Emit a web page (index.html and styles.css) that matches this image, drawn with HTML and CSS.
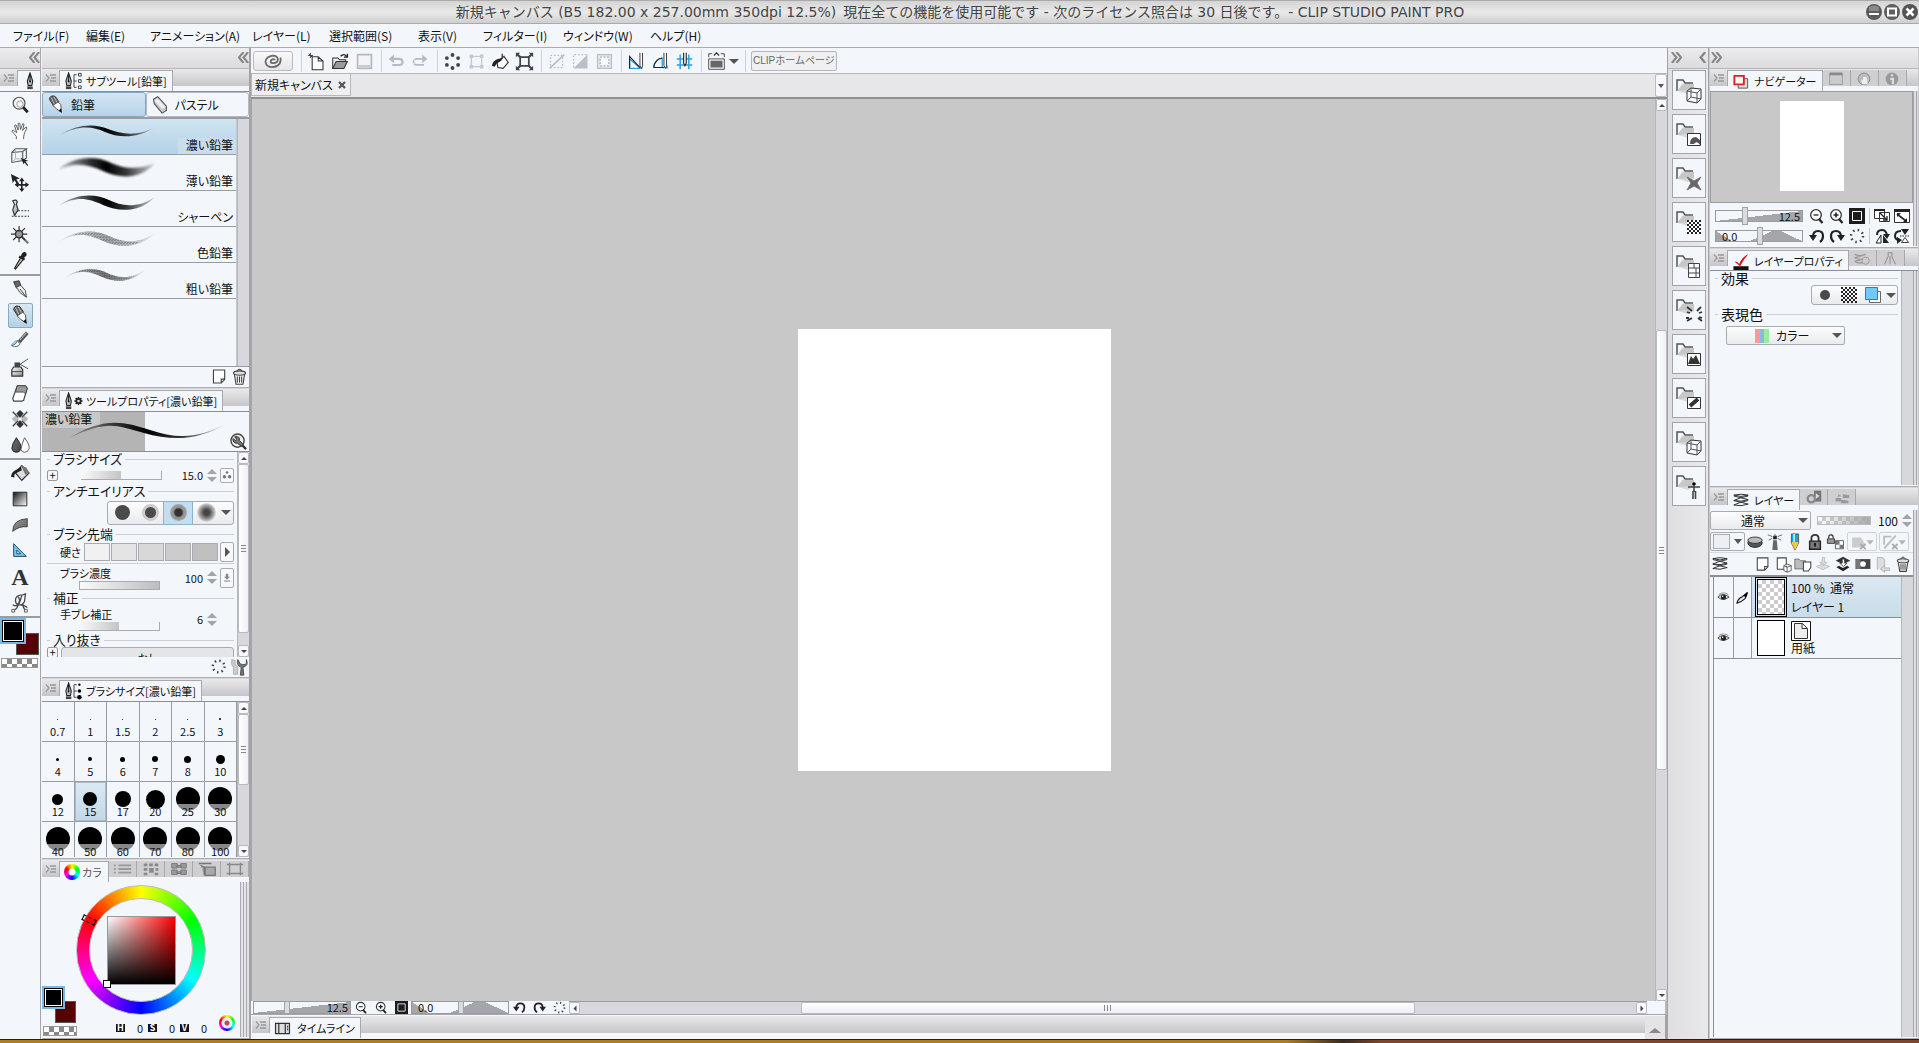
FILE: index.html
```html
<!DOCTYPE html>
<html lang="ja">
<head>
<meta charset="utf-8">
<title>CLIP STUDIO PAINT PRO</title>
<link rel="stylesheet" href="styles.css">
</head>
<body>
<svg class="defs" width="0" height="0" aria-hidden="true">
<defs>
<linearGradient id="gm" x1="0" y1="0" x2="1" y2="1"><stop offset="0" stop-color="#fff"/><stop offset="1" stop-color="#888"/></linearGradient>
<linearGradient id="gd" x1="0" y1="0" x2="1" y2="1"><stop offset="0" stop-color="#111"/><stop offset="1" stop-color="#fff"/></linearGradient>
<linearGradient id="gs" x1="0" x2="1"><stop offset="0" stop-color="#111" stop-opacity=".2"/><stop offset=".35" stop-color="#111" stop-opacity=".9"/><stop offset=".5" stop-color="#000"/><stop offset=".7" stop-color="#111" stop-opacity=".85"/><stop offset="1" stop-color="#111" stop-opacity=".15"/></linearGradient>
<pattern id="pc" width="4" height="4" patternUnits="userSpaceOnUse"><path d="M0 0h2v2h-2zM2 2h2v2h-2z" fill="#222"/></pattern>
<pattern id="pn" width="3" height="3" patternUnits="userSpaceOnUse"><path d="M0 0h2v1h-2zM1 2h2v1h-2z" fill="#444"/></pattern>
</defs>
<symbol id="i-menu" viewBox="0 0 12 10"><path d="M1 1.500l3 3.500-3 3.500M5 2h6M6 5h5M5 8h6" fill="none" stroke="#999" stroke-width="1.300"/></symbol>
<symbol id="i-chl" viewBox="0 0 12 12"><path d="M6 0L1 6l5 6M11 0L6 6l5 6" fill="none" stroke="#858585" stroke-width="2.200"/></symbol>
<symbol id="i-chr" viewBox="0 0 12 12"><path d="M1 0l5 6-5 6M6 0l5 6-5 6" fill="none" stroke="#858585" stroke-width="2.200"/></symbol>
<symbol id="i-ch1" viewBox="0 0 12 12"><path d="M9 0L4 6l5 6" fill="none" stroke="#858585" stroke-width="2.500"/></symbol>
<symbol id="i-nib" viewBox="0 0 10 20"><path d="M5 1v9M5 1L2 10l1 5h4l1-5z" fill="#bbb" stroke="#222" stroke-width="1.200"/><circle cx="5" cy="10.500" r="1"/><path d="M2 16h6v3H2z" fill="#444"/></symbol>
<symbol id="i-nibs" viewBox="0 0 22 20"><use href="#i-nib" x="0" y="0" width="10" height="20"/><path d="M14 3h-3v14h3M11 10h3" fill="none" stroke="#333"/><path d="M16 1.500h3v3h-3zM16 8.500h3v3h-3zM16 15.500h3v3h-3z" fill="none" stroke="#333"/></symbol>
<symbol id="i-nibd" viewBox="0 0 22 20"><use href="#i-nib" x="0" y="0" width="10" height="20"/><path d="M14 3h-3v14h3M11 10h3" fill="none" stroke="#333"/><circle cx="17" cy="3" r="1.300"/><circle cx="17" cy="10" r="2"/><circle cx="17" cy="17" r="2.500"/></symbol>
<symbol id="i-nibg" viewBox="0 0 22 20"><use href="#i-nib" x="0" y="0" width="10" height="20"/><path d="M16 5.500v9M11.500 10h9M12.800 6.800l6.400 6.400M19.200 6.800l-6.400 6.400" stroke="#222" stroke-width="1.600"/><circle cx="16" cy="10" r="2.400" fill="#ddd" stroke="#222" stroke-width="1.800"/></symbol>
<symbol id="t-zoom" viewBox="0 0 22 22"><circle cx="10" cy="9" r="6.500" fill="#f4f4f4" stroke="#555" stroke-width="1.300"/><circle cx="11" cy="10" r="3.500" fill="none" stroke="#999"/><path d="M14.500 13.500l5 5.500" stroke="#222" stroke-width="3"/></symbol>
<symbol id="t-hand" viewBox="0 0 22 22"><path d="M7 20v-3l-5-6 1.500-1 4 3L5 5l1.500-.7L9 10V2.500h1.700L11.500 9.500 14 3l1.500.5-1.700 7L17.500 6.500l1.200 1L16 13l-1 4v3" fill="#fff" stroke="#555"/></symbol>
<symbol id="t-cube" viewBox="0 0 22 22"><path d="M2 6l12-1v10l-12 2zM2 6l4-4h12l-4 3M18 2v10l-4 3" fill="none" stroke="#555" stroke-width="1.200"/><path d="M6 2v11l-4 4M6 13h9" fill="none" stroke="#aaa"/><path d="M12 12l8 3-3 1 3 4-1 1-3-4-1 2z" fill="#222"/></symbol>
<symbol id="t-move" viewBox="0 0 22 22"><path d="M1 1l10 5-4 1 3 5-2 1-3-5-2 3z" fill="#222"/><path d="M13 7v12M7 13h12" stroke="#222" stroke-width="1.800"/><path d="M13 5l3 4h-6zM13 21l3-4h-6zM5 13l4-3v6zM21 13l-4-3v6z" fill="#222"/></symbol>
<symbol id="t-sel" viewBox="0 0 22 22"><path d="M3 2q4-2 5 1l-1 3 2 6-4 6-2-6 2-6z" fill="url(#gm)" stroke="#333" stroke-width="1.300"/><path d="M9 13h12M2 19h19" stroke="#333" stroke-width="1.200" stroke-dasharray="2 1.500"/></symbol>
<symbol id="t-wand" viewBox="0 0 22 22"><path d="M12 12l8 8" stroke="#777" stroke-width="2.500"/><path d="M10 1v18M1 10h18M3.500 3.500l13 13M16.500 3.500l-13 13" stroke="#333" stroke-width="1.300"/><circle cx="10" cy="10" r="4" fill="#999" stroke="#333" stroke-width="1.500"/></symbol>
<symbol id="t-drop" viewBox="0 0 22 22"><path d="M6 20l-1-1 7-12 3 2z" fill="url(#gm)" stroke="#222" stroke-width="1.200"/><path d="M10 6l6 3.500" stroke="#222" stroke-width="2.500"/><path d="M12 6q1-5 4-5t2 4l-4 4z" fill="#222"/></symbol>
<symbol id="t-pen" viewBox="0 0 22 22"><path d="M4 3l6-1 2 5-5 3z" fill="#666" stroke="#333"/><path d="M7 9l5-2 5 6 1 7-7-5z" fill="#eee" stroke="#444"/><path d="M11 11l7 9" stroke="#333"/></symbol>
<symbol id="t-pencil" viewBox="0 0 22 22"><path d="M4 5q0-3 3-4 3 0 4 1l4 6-6 5z" fill="#666" stroke="#333"/><path d="M6 3l4 8M9 2l4 7" stroke="#ccc"/><path d="M8 12l6-4 3 3 1 9-6-4z" fill="#fff" stroke="#444"/><path d="M14.500 18l3.500 2.500-.5-5z" fill="#111"/></symbol>
<symbol id="t-brush" viewBox="0 0 22 22"><path d="M1 16q6-9 10-4 0 8-10 4z" fill="#9fd0ee" stroke="#8bc"/><path d="M2 16q5-1 6-5l3 3q-3 5-9 2z" fill="#fff" stroke="#567"/><path d="M10 12l9-10" stroke="#555" stroke-width="4"/><path d="M11 10l7-8" stroke="#ddd"/></symbol>
<symbol id="t-air" viewBox="0 0 22 22"><path d="M2 14l2-3h8l2 3v7H2z" fill="url(#gm)" stroke="#333" stroke-width="1.300"/><path d="M5 6h6v5H5z" fill="#444"/><path d="M11 8l9-6M11 8l9 5M2 16h12" fill="none" stroke="#444"/></symbol>
<symbol id="t-eraser" viewBox="0 0 22 22"><path d="M8 3h9l2 3-4 13-2 1H4l-1-3z" fill="#fff" stroke="#444" stroke-width="1.300"/><path d="M8 3h9l2 3-2 6-2-2H6z" fill="#999" stroke="#444"/></symbol>
<symbol id="t-deco" viewBox="0 0 22 22"><path d="M2 11l4-4 4 4-4 4zM12 11l4-4 4 4-4 4z" fill="#bbb"/><path d="M11 1l4 4-4 5-4-5zM11 12l4 5-4 4-4-4z" fill="#333"/><path d="M3 3l6 6M19 3l-6 6M3 19l6-6M19 19l-6-6" stroke="#444" stroke-width="1.500"/></symbol>
<symbol id="t-blur" viewBox="0 0 22 22"><path d="M7 3q6 8 5 12-1 4-5 4t-5-4q0-5 5-12z" fill="url(#gm)" stroke="#222"/><path d="M7 3q6 8 5 12-1 4-5 4t-5-4q0-5 5-12z" fill="#222" opacity=".65"/><path d="M16 3q6 8 5 12-1 4-5 4-3 0-4-3 1-6 4-13z" fill="#fff" stroke="#555"/></symbol>
<symbol id="t-fill" viewBox="0 0 22 22"><path d="M6 11l7-8 8 8-8 8z" fill="#ddd" stroke="#333" stroke-width="1.300"/><path d="M12 3l6 2 3 6-4 2z" fill="#777"/><path d="M1 15q1-6 7-8l4-3 1 4-6 3q-3 1-2 5z" fill="#222"/></symbol>
<symbol id="b-fill" viewBox="0 0 22 22"><path d="M7 12l8-7 5 7-6 7-6-1z" fill="#fff" stroke="#333" stroke-width="1.300"/><path d="M13 2v6" stroke="#333" stroke-width="1.500"/><path d="M1 16q1-6 7-8l5-1-1 3-5 3-3 4z" fill="#222"/></symbol>
<symbol id="t-grad" viewBox="0 0 22 22"><path d="M3.500 3.500h15v15h-15z" fill="url(#gd)" stroke="#222"/></symbol>
<symbol id="t-fig" viewBox="0 0 22 22"><path d="M3 18Q3 5 19 4v9q-9-1-16 5z" fill="url(#gm)" stroke="#444" /><path d="M3 18Q3 5 19 4v9q-9-1-16 5z" fill="#333" opacity=".5"/></symbol>
<symbol id="t-ruler" viewBox="0 0 22 22"><path d="M4 3v14h14zM7.500 10v4h4z" fill="#6ec5ef" fill-rule="evenodd" stroke="#246" /></symbol>
<symbol id="t-corr" viewBox="0 0 22 22"><path d="M4 19q5-2 5-8M18 20q-4-3-4-9M6 8q0-6 8-6l3-1-1 8q-2 5-7 4-3-1-3-5zM9 4q3 4 0 8M13 3l-3 9M3 13q4 2 7 0 6 0 9 3" fill="none" stroke="#444" stroke-width="1.400"/><path d="M2 18h3v3H2zM16 18h3v3h-3z" fill="#fff" stroke="#555"/></symbol>
<symbol id="i-page" viewBox="0 0 22 22"><path d="M4 3.500h13v11l-4 4H4zM17 14h-4v4" fill="#fff" stroke="#444" stroke-width="1.300"/></symbol>
<symbol id="i-trash" viewBox="0 0 22 22"><path d="M5 8h12l-2 12H7z" fill="#eee" stroke="#444" stroke-width="1.300"/><ellipse cx="11" cy="7" rx="7" ry="2.500" fill="#ddd" stroke="#444" stroke-width="1.300"/><path d="M8 5q3-5 6 0M8.500 11v7M13.500 11v7M11 11v7" fill="none" stroke="#444" stroke-width="1.200"/></symbol>
<symbol id="i-swirl" viewBox="0 0 22 18"><path d="M13 8q-1-2-4 0-2 3 2 3.500 5 0 5.500-4Q16 3 11 3 3 4 2.500 10q1 6 8 6 8-1 9-7V5" fill="none" stroke="#6a6a6a" stroke-width="2"/></symbol>
<symbol id="b-new" viewBox="0 0 22 22"><path d="M6 5.500h7l5.500 5v10H6zM13 5.500v5h5" fill="#fff" stroke="#333" stroke-width="1.200"/><path d="M1 4h6M4 1v6M2 2l4 4" stroke="#333"/></symbol>
<symbol id="b-open" viewBox="0 0 22 22"><path d="M2 19V7h6l2 2h7v3" fill="#eee" stroke="#333" stroke-width="1.200"/><path d="M2 19l4-8h13l-4 8z" fill="#999" stroke="#333" stroke-width="1.200"/><path d="M11 5q4-4 7 0M19 2v4h-4" fill="none" stroke="#222" stroke-width="1.500"/></symbol>
<symbol id="b-save" viewBox="0 0 22 22"><path d="M3 3h16v16H3z" fill="#f4f4f6" stroke="#b7b9bc" stroke-width="2"/><path d="M4 15h14v3H4z" fill="#c8cacc"/></symbol>
<symbol id="b-undo" viewBox="0 0 22 22"><path d="M5 8h9q4 0 4 3.500T14 15H6" fill="none" stroke="#b7bac0" stroke-width="2.500"/><path d="M8 3v10L2 8z" fill="#b7bac0"/></symbol>
<symbol id="b-redo" viewBox="0 0 22 22"><path d="M16 8H7q-4 0-4 3.500T7 15h9" fill="none" stroke="#b7bac0" stroke-width="2" stroke-dasharray="12 1 3 1"/><path d="M13 3v10l6-5z" fill="#b7bac0"/></symbol>
<symbol id="b-spin" viewBox="0 0 22 22"><g fill="#444"><circle cx="11" cy="3.500" r="2.200"/><circle cx="11" cy="18.500" r="2.200"/><circle cx="4.500" cy="7" r="2.200"/><circle cx="17.500" cy="7" r="2.200"/><circle cx="4.500" cy="15" r="2.200"/><circle cx="17.500" cy="15" r="2.200"/></g></symbol>
<symbol id="b-tf" viewBox="0 0 22 22"><path d="M5 5h12v12H5z" fill="none" stroke="#c5c8cc" stroke-width="1.500"/><path d="M3 3h4v4H3zM15 3h4v4h-4zM3 15h4v4H3zM15 15h4v4h-4z" fill="#c5c8cc"/></symbol>
<symbol id="b-x" viewBox="0 0 22 22"><path d="M6 6h10v10H6z" fill="none" stroke="#444" stroke-width="2"/><path d="M2 2l5 5M20 2l-5 5M2 20l5-5M20 20l-5-5" stroke="#444" stroke-width="2.500"/><path d="M1 1h5l-5 5zM21 1h-5l5 5zM1 21h5l-5-5zM21 21h-5l5-5z" fill="#444"/></symbol>
<symbol id="b-des" viewBox="0 0 22 22"><path d="M4 4h14v14H4z" fill="none" stroke="#bcbfc4" stroke-width="1.500" stroke-dasharray="2 2"/><path d="M3 19L20 3" stroke="#bcbfc4" stroke-width="2"/></symbol>
<symbol id="b-inv" viewBox="0 0 22 22"><path d="M3 19L19 3v16z" fill="#bcbfc4"/><path d="M18 3H3v15" fill="none" stroke="#bcbfc4" stroke-width="1.500" stroke-dasharray="2 2"/></symbol>
<symbol id="b-sel" viewBox="0 0 22 22"><path d="M3 3h16v16H3z" fill="#e6e8ea" stroke="#bcbfc4" stroke-width="1.500"/><path d="M6 6h10v10H6z" fill="#f8f9fb" stroke="#aaadb2" stroke-width="1.500" stroke-dasharray="2 2"/></symbol>
<symbol id="b-sn1" viewBox="0 0 22 22"><path d="M3 8v11h13z" fill="none" stroke="#2d9fe0" stroke-width="1.500"/><path d="M3 19V5l12 13" fill="none" stroke="#222" stroke-width="1.300"/><path d="M15 1v15l2 3 1-3V1" fill="#fff" stroke="#222"/></symbol>
<symbol id="b-sn2" viewBox="0 0 22 22"><path d="M3 18Q4 8 13 7v11M16 10l3 8h-6" fill="none" stroke="#2d9fe0" stroke-width="1.500"/><path d="M3 18Q5 8 13 7M3 18h12" fill="none" stroke="#222" stroke-width="1.300"/><path d="M15 1v15l2 3 1-3V1" fill="#fff" stroke="#222"/></symbol>
<symbol id="b-sn3" viewBox="0 0 22 22"><path d="M2 8h18M2 15h18M6 3v17M16 3v17" fill="none" stroke="#2d9fe0" stroke-width="1.700"/><path d="M10 1v12l1.500 3 1.500-3V1" fill="#fff" stroke="#222" stroke-width="1.300"/></symbol>
<symbol id="b-obj" viewBox="0 0 22 22"><path d="M2 6V2h4M16 2h4v4" fill="none" stroke="#333"/><path d="M8 4l3-3 3 3" fill="none" stroke="#333" stroke-width="1.500"/><path d="M2 8h18v12H2z" fill="#fff" stroke="#333"/><path d="M4 10h14v8H4z" fill="#666"/></symbol>
<symbol id="n-out" viewBox="0 0 16 16"><circle cx="7" cy="7" r="5.300" fill="#fff" stroke="#333" stroke-width="1.300"/><path d="M4.500 7h5" stroke="#222" stroke-width="1.300"/><path d="M10 11l3.500 4" stroke="#222" stroke-width="2.200"/></symbol>
<symbol id="n-in" viewBox="0 0 16 16"><circle cx="7" cy="7" r="5.300" fill="#fff" stroke="#333" stroke-width="1.300"/><path d="M4.500 7h5M7 4.500v5" stroke="#222" stroke-width="1.600"/><path d="M10 11l3.500 4" stroke="#222" stroke-width="2.200"/></symbol>
<symbol id="n-fit" viewBox="0 0 16 16"><path d="M0 0h16v16H0z" fill="#1c1c1c"/><path d="M3.500 3.500h9v9h-9z" fill="none" stroke="#fff" stroke-width="1"/></symbol>
<symbol id="n-ccw" viewBox="0 0 16 16"><path d="M4 9Q4 3 9 3q5 0 5 5 0 4-3 6" fill="none" stroke="#222" stroke-width="2.200"/><path d="M0 7h8l-4 6z" fill="#222"/></symbol>
<symbol id="n-cw" viewBox="0 0 16 16"><path d="M12 9q0-6-5-6-5 0-5 5 0 4 3 6" fill="none" stroke="#222" stroke-width="2.200"/><path d="M16 7H8l4 6z" fill="#222"/></symbol>
<symbol id="n-rst" viewBox="0 0 16 16"><circle cx="8" cy="8" r="6" fill="none" stroke="#444" stroke-width="2.500" stroke-dasharray="1.500 3.200"/></symbol>
<symbol id="n-w1" viewBox="0 0 16 16"><path d="M.5 1.500h10v9H.5zM5.500 4.500h10v9h-10z" fill="#fff" stroke="#333"/><path d="M0 1h11v2H0z" fill="#222"/><path d="M6 5l7 7M13 8v4H9" stroke="#222" stroke-width="1.300" fill="none"/></symbol>
<symbol id="n-w2" viewBox="0 0 16 16"><path d="M.5 1.500h15v13H.5z" fill="#fff" stroke="#333"/><path d="M0 1h16v3H0z" fill="#222"/><path d="M3 6l9 7" stroke="#222" stroke-width="1.600" fill="none"/><path d="M13 10v4H9zM3 9V5h4z" fill="#222"/></symbol>
<symbol id="n-fh" viewBox="0 0 16 16"><path d="M7 7v8H2z" fill="#fff" stroke="#222"/><path d="M3 7q0-5 5-5 4 0 5 5" fill="none" stroke="#222" stroke-width="2"/><path d="M9 6h7l-3 5zM9 7v8h6z" fill="#222"/></symbol>
<symbol id="n-fv" viewBox="0 0 16 16"><path d="M7 1h8l-4 6z" fill="#222"/><path d="M6 8h10" stroke="#222" stroke-dasharray="1.500 1"/><path d="M7.500 14.500h7l-3.500-5z" fill="#fff" stroke="#444"/><path d="M7 3Q1 3 1 8q0 3 3 4" fill="none" stroke="#222" stroke-width="2"/><path d="M3 9l5 3-5 4z" fill="#222"/></symbol>
<symbol id="d-fold" viewBox="0 0 28 28"><path d="M2 15V4h6l2 3h8" fill="none" stroke="#555" stroke-width="1.500"/><path d="M2 15l6-7h11v6z" fill="#bbb"/><path d="M7 8h12v7l-6 3-10-3z" fill="#ccc" opacity=".7"/></symbol>
<symbol id="d-cube" viewBox="0 0 28 28"><path d="M12 15l4-3 10 1v10l-4 4-10-2z" fill="#f6f8fb" stroke="#333"/><path d="M12 15l10 2 4-4M22 17v10M16 12v9l-4 4M16 21l10 2" fill="none" stroke="#555"/></symbol>
<symbol id="i-eye" viewBox="0 0 16 12"><path d="M1 6q6-6 14 0-8 6-14 0z" fill="#ddd" stroke="#333"/><circle cx="8" cy="6" r="3.200" fill="#222"/><circle cx="7" cy="5" r="1" fill="#fff"/><path d="M2 3q6-4 12 0" fill="none" stroke="#777"/></symbol>
<symbol id="l-stack" viewBox="0 0 20 16"><path d="M2 2q8 3 16 0-8-2-16 0zM18 3Q8 5 2 8q8 2 16-1M18 8Q8 10 2 13q8 2 16-1M2 3q8 2 16 4M2 8q8 2 16 4" fill="none" stroke="#333" stroke-width="1.100"/></symbol>
<symbol id="s-thin" viewBox="0 0 100 24"><path d="M1 16C22 3 38 4 51 9S80 17 98 7C80 19 62 18 48 12S22 5 1 16z" fill="url(#gs)"/></symbol>
<symbol id="s-thick" viewBox="0 0 100 24"><path d="M1 14C16-1 40 0 52 6S80 15 98 7C82 25 62 22 46 15S18 6 1 14z" fill="url(#gs)"/></symbol>
<symbol id="s-mid" viewBox="0 0 100 24"><path d="M1 14C20 0 40 2 52 8S80 17 98 5C82 21 62 20 46 13S20 4 1 14z" fill="url(#gs)"/></symbol>
<symbol id="s-noise" viewBox="0 0 100 24"><path d="M1 14C20 0 40 2 52 8S80 17 98 5C82 21 62 20 46 13S20 4 1 14z" fill="url(#gs)" opacity=".5"/><path d="M14 8C28 1 42 3 52 8S72 15 86 12C76 19 62 20 46 13S28 5 14 8z" fill="url(#pn)" opacity=".6"/></symbol>
</svg>

<div class="app">
<header class="titlebar">
  <h1>新規キャンバス (B5 182.00 x 257.00mm 350dpi 12.5%)&ensp;現在全ての機能を使用可能です - 次のライセンス照合は 30 日後です。- CLIP STUDIO PAINT PRO</h1>
  <div class="winbtns">
    <button aria-label="最小化"><svg viewBox="0 0 16 16"><circle cx="8" cy="8" r="8" fill="#5b5b5b"/><path d="M3 3q5-3 10 0v4H3z" fill="#8a8a8a"/><path d="M3 9h10v2H3z" fill="#fff"/></svg></button>
    <button aria-label="最大化"><svg viewBox="0 0 16 16"><circle cx="8" cy="8" r="8" fill="#5f5f5f"/><path d="M4 4.500h8v7H4z" fill="none" stroke="#fff" stroke-width="2"/></svg></button>
    <button aria-label="閉じる"><svg viewBox="0 0 16 16"><circle cx="8" cy="8" r="8" fill="#555"/><path d="M4.500 4.500l7 7M11.500 4.500l-7 7" stroke="#fff" stroke-width="2.500"/></svg></button>
  </div>
</header>
<nav class="menubar"><button>ファイル(F)</button><button>編集(E)</button><button>アニメーション(A)</button><button>レイヤー(L)</button><button>選択範囲(S)</button><button>表示(V)</button><button>フィルター(I)</button><button>ウィンドウ(W)</button><button>ヘルプ(H)</button></nav>

<div class="work">
<aside class="tools">
  <div class="collapse end"><svg class="chev"><use href="#i-chl"/></svg></div>
  <div class="tabs"><button class="tabmenu"><svg><use href="#i-menu"/></svg></button><div class="tab on nibtab"><svg class="nib"><use href="#i-nib"/></svg></div></div>
  <div class="toolset">
    <button><svg><use href="#t-zoom"/></svg></button><button><svg><use href="#t-hand"/></svg></button><button><svg><use href="#t-cube"/></svg></button><button><svg><use href="#t-move"/></svg></button><button><svg><use href="#t-sel"/></svg></button><button><svg><use href="#t-wand"/></svg></button><button><svg><use href="#t-drop"/></svg></button>
  </div>
  <div class="toolset">
    <button><svg><use href="#t-pen"/></svg></button><button class="sel"><svg><use href="#t-pencil"/></svg></button><button><svg><use href="#t-brush"/></svg></button><button><svg><use href="#t-air"/></svg></button><button><svg><use href="#t-eraser"/></svg></button><button><svg><use href="#t-deco"/></svg></button><button><svg><use href="#t-blur"/></svg></button>
  </div>
  <div class="toolset">
    <button><svg><use href="#t-fill"/></svg></button><button><svg><use href="#t-grad"/></svg></button><button><svg><use href="#t-fig"/></svg></button><button><svg><use href="#t-ruler"/></svg></button><button class="letter">A</button><button><svg><use href="#t-corr"/></svg></button>
  </div>
  <div class="swatches"><button class="sub" aria-label="サブカラー"></button><button class="main" aria-label="メインカラー"></button><button class="clear" aria-label="透明色"></button></div>
</aside>

<div class="left">
  <div class="collapse end"><svg class="chev"><use href="#i-chl"/></svg></div>
  <section class="panel">
    <div class="tabs"><button class="tabmenu"><svg><use href="#i-menu"/></svg></button><div class="tab on"><svg class="nibs"><use href="#i-nibs"/></svg><span>サブツール[鉛筆]</span></div></div>
    <div class="subgroups"><button class="on"><svg><use href="#t-pencil"/></svg>鉛筆</button><button><svg viewBox="0 0 22 22"><path d="M4 5l5-3 10 11v5l-5 3L5 10z" fill="#ccc" stroke="#555" stroke-width="1.300"/><path d="M5 6l4-2 9 10-4 2z" fill="#eee"/></svg>パステル</button></div>
    <div class="scroller subs">
      <ul class="brushes">
        <li class="on"><svg><use href="#s-thin"/></svg><span>濃い鉛筆</span></li>
        <li><svg class="soft"><use href="#s-thick"/></svg><span>薄い鉛筆</span></li>
        <li><svg><use href="#s-mid"/></svg><span>シャーペン</span></li>
        <li><svg class="pale"><use href="#s-noise"/></svg><span>色鉛筆</span></li>
        <li><svg class="small"><use href="#s-noise"/></svg><span>粗い鉛筆</span></li>
      </ul>
      <div class="vbar"></div>
    </div>
    <div class="foot"><button><svg><use href="#i-page"/></svg></button><button><svg><use href="#i-trash"/></svg></button></div>
  </section>

  <section class="panel">
    <div class="tabs"><button class="tabmenu"><svg><use href="#i-menu"/></svg></button><div class="tab on"><svg class="nibs"><use href="#i-nibg"/></svg><span>ツールプロパティ[濃い鉛筆]</span></div></div>
    <div class="preview"><span>濃い鉛筆</span><svg class="stroke" preserveAspectRatio="none" viewBox="0 0 160 24"><path d="M1 19C35-2 55 2 82 11S130 20 159 4C130 22 105 22 76 14S40 1 1 19z" fill="url(#gs)"/></svg><svg class="wrench" viewBox="0 0 18 18"><circle cx="8" cy="8" r="7" fill="#eee" stroke="#444" stroke-width="1.500"/><path d="M5 4l2 3-1 1-3-2q0 5 5 5l4 3 2-2-4-4q1-5-5-4z" fill="#777" stroke="#333"/><path d="M13 13l4 4" stroke="#333" stroke-width="2.500"/></svg></div>
    <div class="scroller">
      <div class="props">
        <h3>ブラシサイズ</h3>
        <div class="row r18"><button class="plus">+</button><input type="range" class="half" aria-label="ブラシサイズ"><input class="num" value="15.0" aria-label="サイズ値"><i class="spin"></i><button class="dyn"><svg viewBox="0 0 14 14"><circle cx="7" cy="4" r="1.500"/><circle cx="4" cy="9" r="2"/><circle cx="10" cy="9" r="2"/></svg></button></div>
        <h3>アンチエイリアス</h3>
        <div class="row r26"><div class="seg"><button><i class="dot"></i></button><button><i class="dot d2"></i></button><button class="on"><i class="dot d3"></i></button><button><i class="dot d4"></i></button><button class="dd"><i class="arr"></i></button></div></div>
        <h3>ブラシ先端</h3>
        <div class="row r22"><span class="sublabel">硬さ</span><div class="hard"><i></i><i></i><i></i><i></i><i></i></div><button class="dyn tall"><i class="arrr"></i></button></div>
        <div class="row r28 ruled"><div class="stack"><label for="dens">ブラシ濃度</label><input id="dens" type="range" class="full"></div><input class="num" value="100" aria-label="濃度値"><i class="spin"></i><button class="dyn tall"><svg viewBox="0 0 14 20"><path d="M5 3h4v5h3l-5 5-5-5h3zM2 14h10v2H2z" fill="#888"/></svg></button></div>
        <h3>補正</h3>
        <div class="row r28"><div class="stack"><label for="stab">手ブレ補正</label><input id="stab" type="range" class="half"></div><input class="num" value="6" aria-label="補正値"><i class="spin"></i><span class="dyn none"></span></div>
        <h3>入り抜き</h3>
        <div class="row r28 topal"><button class="plus">+</button><button class="wide">なし</button></div>
      </div>
      <div class="vbar"><button class="up"></button><div class="thumb t-prop"></div><button class="down"></button></div>
    </div>
    <div class="foot"><button><svg viewBox="0 0 22 22"><use href="#n-rst" x="1" y="2" width="18" height="18"/></svg></button><button><svg viewBox="0 0 22 22"><path d="M2 3l4 1v5l3 2v9H4v-8L2 9z" fill="#ccc" stroke="#aaa"/><path d="M9 3q-2 7 4 9l-1 9h4l-1-9q7-2 4-9v5l-4 1-3-1z" fill="#777" stroke="#444"/></svg></button></div>
  </section>

  <section class="panel">
    <div class="tabs"><button class="tabmenu"><svg><use href="#i-menu"/></svg></button><div class="tab on"><svg class="nibs"><use href="#i-nibd"/></svg><span>ブラシサイズ[濃い鉛筆]</span></div></div>
    <div class="scroller sizes">
      <div class="sizegrid">
        <button><i class="p1"></i>0.7</button><button><i class="p1"></i>1</button><button><i class="p1"></i>1.5</button><button><i class="p1"></i>2</button><button><i class="p1"></i>2.5</button><button><i class="p2"></i>3</button>
        <button><i class="p3"></i>4</button><button><i class="p4"></i>5</button><button><i class="p5"></i>6</button><button><i class="p6"></i>7</button><button><i class="p7"></i>8</button><button><i class="p9"></i>10</button>
        <button><i class="p11"></i>12</button><button class="on"><i class="p14"></i>15</button><button><i class="p16"></i>17</button><button><i class="p19"></i>20</button><button class="big"><i></i>25</button><button class="big"><i></i>30</button>
        <button class="big"><i></i>40</button><button class="big"><i></i>50</button><button class="big"><i></i>60</button><button class="big"><i></i>70</button><button class="big"><i></i>80</button><button class="big"><i></i>100</button>
      </div>
      <div class="vbar"><button class="up"></button><div class="thumb t-size"></div><button class="down"></button></div>
    </div>
  </section>

  <section class="panel grow">
    <div class="tabs"><button class="tabmenu"><svg><use href="#i-menu"/></svg></button><div class="tab on coltab"><i class="minwheel"></i><span>カラ</span></div>
      <button class="tab"><svg viewBox="0 0 22 14"><path d="M1 3h2M1 7h2M1 11h2M6 3h14M6 7h14M6 11h14" stroke="#999" stroke-width="2"/></svg></button>
      <button class="tab"><svg viewBox="0 0 22 14"><path d="M3 1h4v3H3zM9 1h4v3H9zM15 1h4v3h-4zM3 6h4v3H3zM9 6h5v5H9zM16 6h3v3h-3zM3 11h4v3H3zM15 11h4v3h-4z" fill="#888"/></svg></button>
      <button class="tab"><svg viewBox="0 0 22 14"><path d="M3 1h6v5H3zM13 1h6v5h-6zM3 8h6v5H3zM13 8h6v5h-6zM9 3h4v2H9zM9 10h4v2H9z" fill="#999" stroke="#777"/></svg></button>
      <button class="tab"><svg viewBox="0 0 22 14"><path d="M2 1h14M4 3l4 2v9M9 5h11v9H9z" fill="#aaa" stroke="#777" stroke-width="1.500"/></svg></button>
      <button class="tab"><svg viewBox="0 0 22 14"><path d="M2 2h18M2 12h18M5 0v14M17 0v14" stroke="#888" stroke-width="1.500"/></svg></button></div>
    <div class="color">
      <div class="wheelbox">
        <div class="wheel"><div class="hole"><div class="square"><i class="pick"></i></div></div><i class="huepick"></i></div>
        <div class="swatches"><button class="sub" aria-label="サブカラー"></button><button class="main" aria-label="メインカラー"></button><button class="clear" aria-label="透明色"></button></div>
        <div class="hsv"><b>H</b><span>0</span><b>S</b><span>0</span><b>V</b><span>0</span></div>
        <i class="miniplay"></i>
      </div>
      <div class="grip"></div>
    </div>
  </section>
</div>

<main class="main-col">
  <div class="toolbar">
    <button class="swirl"><svg><use href="#i-swirl"/></svg></button><i class="sep first"></i>
    <button><svg><use href="#b-new"/></svg></button><button><svg><use href="#b-open"/></svg></button><button><svg><use href="#b-save"/></svg></button><i class="sep"></i>
    <button><svg><use href="#b-undo"/></svg></button><button><svg><use href="#b-redo"/></svg></button><i class="sep"></i>
    <button><svg><use href="#b-spin"/></svg></button><button><svg><use href="#b-tf"/></svg></button><button><svg><use href="#b-fill"/></svg></button><button><svg><use href="#b-x"/></svg></button><i class="sep"></i>
    <button><svg><use href="#b-des"/></svg></button><button><svg><use href="#b-inv"/></svg></button><button><svg><use href="#b-sel"/></svg></button><i class="sep"></i>
    <button><svg><use href="#b-sn1"/></svg></button><button><svg><use href="#b-sn2"/></svg></button><button><svg><use href="#b-sn3"/></svg></button><i class="sep"></i>
    <button><svg><use href="#b-obj"/></svg></button><button class="ddn"><i class="arr"></i></button><i class="sep"></i>
    <a class="clip" href="#">CLIPホームページ</a>
  </div>
  <div class="doctabs"><div class="doctab">新規キャンバス<button aria-label="閉じる"><svg viewBox="0 0 8 8"><path d="M1 1l6 6M7 1L1 7" stroke="#555" stroke-width="2.200"/></svg></button></div><button class="doclist"><i class="arr"></i></button></div>
  <div class="canvasrow">
    <div class="canvas"><div class="paper"></div></div>
    <div class="vbar main-v"><button class="up"></button><div class="track"><div class="thumb"></div></div><button class="down"></button></div>
  </div>
  <div class="status">
    <div class="slidebox w98"><input type="range" class="wedge" aria-label="ズーム"><output>12.5</output></div>
    <button><svg><use href="#n-out"/></svg></button><button><svg><use href="#n-in"/></svg></button><button><svg><use href="#n-fit"/></svg></button>
    <div class="slidebox w98 rot"><input type="range" class="bulge" aria-label="回転"><output>0.0</output></div>
    <button><svg><use href="#n-ccw"/></svg></button><button><svg><use href="#n-cw"/></svg></button><button><svg><use href="#n-rst"/></svg></button>
    <div class="hbar"><button class="lt"></button><div class="track"><div class="thumb"><i></i></div></div><button class="rt"></button></div><i class="corner"></i>
  </div>
  <div class="timeline"><div class="tabs"><button class="tabmenu"><svg><use href="#i-menu"/></svg></button><div class="tab on"><svg class="tl" viewBox="0 0 18 14"><path d="M1.500 1.500h15v11h-15zM5 1v12M12 1v12" fill="#ddd" stroke="#333" stroke-width="1.300"/><path d="M14.500 4v6" stroke="#225" stroke-dasharray="2 1"/></svg><span>タイムライン</span></div></div><button class="rise" aria-label="開く"><svg viewBox="0 0 14 8"><path d="M1 7l6-5 6 5z" fill="#888"/></svg></button></div>
</main>

<aside class="dock">
  <div class="collapse between"><svg class="chev"><use href="#i-chr"/></svg><svg class="chev"><use href="#i-ch1"/></svg></div>
  <div class="dockbtns">
  <button><svg viewBox="0 0 28 28"><use href="#d-fold"/><use href="#d-cube"/></svg></button>
  <button><svg viewBox="0 0 28 28"><use href="#d-fold"/><path d="M12.500 13.500h13v12h-13z" fill="#fff" stroke="#333"/><path d="M15 24q0-7 6-7l4 3v5q-3-5-6-1z" fill="#555"/></svg></button>
  <button><svg viewBox="0 0 28 28"><use href="#d-fold"/><path d="M12 13l7 4 7-4-4 6 4 7-7-4-7 4 4-7z" fill="#666" stroke="#777"/></svg></button>
  <button><svg viewBox="0 0 28 28"><use href="#d-fold"/><path d="M12 12h14v14H12z" fill="#fff"/><path d="M12 12h14v14H12z" fill="url(#pc)"/></svg></button>
  <button><svg viewBox="0 0 28 28"><use href="#d-fold"/><path d="M13.500 11.500h11v14h-11zM13.500 16h11M19 11.500V16M13.500 21h11M21 16v9" fill="#fff" stroke="#444"/></svg></button>
  <button><svg viewBox="0 0 28 28"><use href="#d-fold"/><path d="M12 11l5 4M26 11l-4 4M12 25l5-3M27 25l-4-3M12 16l3 1M24 17l3-1M14 22l-3 0M24 21l3 1" stroke="#333" stroke-width="1.800"/></svg></button>
  <button><svg viewBox="0 0 28 28"><use href="#d-fold"/><path d="M12.500 13.500h13v12h-13z" fill="#fff" stroke="#333"/><path d="M13 24l3-8 2 3 3-4 4 9z" fill="#333"/></svg></button>
  <button><svg viewBox="0 0 28 28"><use href="#d-fold"/><path d="M12.500 13.500h13v11h-13z" fill="#fff" stroke="#333"/><path d="M15 22l8-7" stroke="#333" stroke-width="4"/></svg></button>
  <button><svg viewBox="0 0 28 28"><use href="#d-fold"/><use href="#d-cube"/></svg></button>
  <button><svg viewBox="0 0 28 28"><use href="#d-fold"/><circle cx="19" cy="12" r="1.800"/><path d="M13 15h12M19 14v6M18 19v8M20.500 19v8" stroke="#444" stroke-width="1.600"/></svg></button>
  </div>
</aside>

<div class="right">
  <div class="collapse"><svg class="chev"><use href="#i-chr"/></svg></div>
  <section class="panel nav">
    <div class="tabs"><button class="tabmenu"><svg><use href="#i-menu"/></svg></button><div class="tab on"><svg class="ic18" viewBox="0 0 18 18"><path d="M6 6h10v10H6z" fill="#ddd" stroke="#555"/><path d="M2 3h10v9H2z" fill="#fff" stroke="#d22" stroke-width="2"/></svg><span>ナビゲーター</span></div>
      <button class="tab"><svg viewBox="0 0 22 14"><path d="M4 2h14v12H4z" fill="#ccc" stroke="#999"/><path d="M4 1h14v3H4z" fill="#888"/></svg></button><button class="tab"><svg viewBox="0 0 22 14"><circle cx="11" cy="8" r="6.500" fill="#bbb" stroke="#888"/><path d="M8 9h2V6h4l1 8H9z" fill="#eee"/></svg></button><button class="tab"><svg viewBox="0 0 22 14"><circle cx="11" cy="8" r="7" fill="#999"/><path d="M9 8h3v6M11 3v2" stroke="#ddd" stroke-width="2.500" fill="none"/></svg></button></div>
    <div class="navwrap"><div class="navmain">
      <div class="navview"><div class="navpaper"></div></div>
      <div class="navctl"><div class="slidebox"><input type="range" class="wedge" aria-label="表示倍率"><output>12.5</output></div><button><svg><use href="#n-out"/></svg></button><button><svg><use href="#n-in"/></svg></button><button><svg><use href="#n-fit"/></svg></button><i class="vs"></i><button><svg><use href="#n-w1"/></svg></button><button><svg><use href="#n-w2"/></svg></button></div>
      <div class="navctl"><div class="slidebox rot"><input type="range" class="bulge" aria-label="角度"><output>0.0</output></div><button><svg><use href="#n-ccw"/></svg></button><button><svg><use href="#n-cw"/></svg></button><button><svg><use href="#n-rst"/></svg></button><i class="vs"></i><button><svg><use href="#n-fh"/></svg></button><button><svg><use href="#n-fv"/></svg></button></div>
    </div><div class="edge"></div></div>
  </section>

  <section class="panel lprop">
    <div class="tabs"><button class="tabmenu"><svg><use href="#i-menu"/></svg></button><div class="tab on"><svg class="ic18" viewBox="0 0 18 18"><path d="M1 14h16v4H1z" fill="#111"/><path d="M2 9q4 0 5 3Q10 4 17 1q-5 5-9 13z" fill="#d11"/></svg><span>レイヤープロパティ</span></div>
      <button class="tab"><svg viewBox="0 0 22 14"><path d="M3 3q6 3 12 0M3 7q6 3 12 0M3 11q6 3 12 0M15 3L3 7M15 7L3 11" stroke="#999" stroke-width="1.500" fill="none"/><circle cx="15" cy="10" r="4" fill="#ccc" stroke="#999"/></svg></button><button class="tab"><svg viewBox="0 0 22 14"><path d="M9 1h4v4l4 9M9 1v4l-4 9M11 5v9" stroke="#999" stroke-width="1.300" fill="none"/></svg></button></div>
    <div class="scroller grow">
      <div class="props">
        <h3>効果</h3>
        <div class="effects"><div class="seg"><button><i class="dot"></i></button><button><svg viewBox="0 0 16 16"><path d="M0 0h16v16H0z" fill="url(#pc)"/></svg></button><button><svg viewBox="0 0 16 16"><path d="M4.500 4.500h11v11h-11z" fill="#fff" stroke="#666"/><path d="M.5.500h12v12H.500z" fill="#6fcbf5" stroke="#479"/></svg></button><button class="dd"><i class="arr"></i></button></div></div>
        <h3>表現色</h3>
        <div class="colorsel"><i class="rgb"></i><select aria-label="表現色"><option>カラー</option></select><i class="arr"></i></div>
      </div>
      <div class="vbar"></div><div class="edge"></div>
    </div>
  </section>

  <section class="panel grow">
    <div class="tabs"><button class="tabmenu"><svg><use href="#i-menu"/></svg></button><div class="tab on"><svg class="ic18"><use href="#l-stack"/></svg><span>レイヤー</span></div>
      <button class="tab"><svg viewBox="0 0 22 14"><path d="M11 0h8v12h-8z" fill="#777"/><circle cx="8" cy="9" r="4" fill="none" stroke="#888" stroke-width="2.500"/><path d="M13 3v6l4-3z" fill="#ddd"/></svg></button><button class="tab"><svg viewBox="0 0 22 14"><path d="M4 8h6v4H4zM12 4l7 1v3h-7zM10 10l8 1v3h-8zM7 4l3 2-4 1z" fill="#999"/></svg></button></div>
    <div class="layerwrap"><div class="layers">
      <div class="lrow"><div class="mode"><select aria-label="合成モード"><option>通常</option></select><i class="arr"></i></div><input type="range" class="opac" aria-label="不透明度"><input class="num" value="100" aria-label="不透明度値"><i class="spin"></i></div>
      <div class="lrow icons"><div class="swsel"><i></i><i class="arr"></i></div>
        <button><svg viewBox="0 0 20 20"><ellipse cx="10" cy="11" rx="8" ry="5" fill="#555" stroke="#222"/><ellipse cx="10" cy="8" rx="8" ry="3.500" fill="#bbb" stroke="#333"/></svg></button>
        <button><svg viewBox="0 0 20 20"><path d="M8 8h4l1 11H7z" fill="#666"/><path d="M8 3h4v4H8z" fill="#222"/><path d="M2 2l5 2M18 2l-5 2M3 8l4-2M17 8l-4-2M10 1v3" stroke="#666"/></svg></button>
        <button><svg viewBox="0 0 20 20"><path d="M6 1h8v10l-4 8-4-8z" fill="#1fa0dc" stroke="#555"/><path d="M6.500 10h7v2l-3.500 7-3.500-7z" fill="#f5c54a"/><path d="M8 1h2v9H8z" fill="#aee"/></svg></button>
        <button><svg viewBox="0 0 20 20"><path d="M6 9V6q0-4 4-4t4 4v3" fill="none" stroke="#333" stroke-width="2"/><path d="M4 9h12v9H4z" fill="#777" stroke="#222" stroke-width="1.500"/><path d="M10 11v4" stroke="#111" stroke-width="2"/></svg></button>
        <button><svg viewBox="0 0 20 20"><path d="M3 6V5q0-3 2.500-3T8 5v1" fill="none" stroke="#333" stroke-width="1.300"/><path d="M1.500 6.500h8v5h-8z" fill="#999" stroke="#333"/><path d="M10.500 8.500h9v9h-9z" fill="#fff" stroke="#555"/><path d="M11 9h4v4h-4zM15 13h4v4h-4z" fill="#777"/></svg></button>
        <button class="off"><svg viewBox="0 0 28 20"><path d="M3 5h10l4 7v4H3z" fill="#ccc"/><path d="M12 12l6 6M18 12l-6 6" stroke="#aaa" stroke-width="2"/><path d="M19 8h8l-4 5z" fill="#b5b5b8"/></svg></button><button class="off"><svg viewBox="0 0 28 20"><path d="M3 17L16 3M3 13V4h8" fill="none" stroke="#bbb" stroke-width="2"/><path d="M12 12l6 6M18 12l-6 6" stroke="#aaa" stroke-width="2"/><path d="M19 8h8l-4 5z" fill="#b5b5b8"/></svg></button></div>
      <div class="lrow acts"><button class="lead"><svg><use href="#l-stack"/></svg></button>
        <button><svg><use href="#i-page"/></svg></button>
        <button><svg viewBox="0 0 22 22"><path d="M4 3.500h11v14H4z" fill="#fff" stroke="#444" stroke-width="1.300"/><path d="M12 13l4-2 5 2v6l-5 2-4-2zM12 13l4 2 5-2M16 15v6" fill="#fff" stroke="#444"/></svg></button>
        <button><svg viewBox="0 0 22 22"><path d="M1 17V5h5l2 2h6v10z" fill="#bbb" stroke="#666"/><path d="M11.500 8.500h9v7l-3 4h-6z" fill="#fff" stroke="#444" stroke-width="1.300"/></svg></button>
        <button><svg viewBox="0 0 22 22"><path d="M3 14l8-3 8 3-8 4zM10 3h3v6h3l-4.500 4L7 9h3z" fill="#ddd" stroke="#bbb"/></svg></button>
        <button><svg viewBox="0 0 22 22"><path d="M3 15l8 5 8-5-3-2-5 3-5-3z" fill="#222"/><path d="M2 7l9-5 9 5-9 4z" fill="#333"/><path d="M10 5h3v5h3l-4.500 4L7 10h3z" fill="#fff" stroke="#333"/></svg></button>
        <button><svg viewBox="0 0 22 22"><path d="M2 5h18v12H2z" fill="#444"/><path d="M2 5h6v12H2z" fill="#777"/><circle cx="11" cy="11" r="3.500" fill="#fff"/></svg></button>
        <button><svg viewBox="0 0 22 22"><path d="M4 18V3h6l3 3v8M8 17l5-4v3h6v3h-6v2z" fill="#ddd" stroke="#bbb" stroke-width="1.300"/></svg></button>
        <button><svg><use href="#i-trash"/></svg></button></div>
      <div class="listwrap"><ul class="layerlist">
        <li class="on"><span class="eye"><svg><use href="#i-eye"/></svg></span><span class="pen"><svg viewBox="0 0 14 14"><path d="M1 13q1-5 6-7l4-3-1 5q-4 4-9 5z" fill="#eee" stroke="#222" stroke-width="1.300"/><path d="M8 5l4-4 1 1-2 5z"/></svg></span><span class="body"><i class="thumbnail chk"></i><span class="txt"><b>100 %&nbsp; 通常</b><b>レイヤー 1</b></span></span></li>
        <li><span class="eye"><svg><use href="#i-eye"/></svg></span><span class="pen"></span><span class="body"><i class="thumbnail"></i><span class="txt paperlbl"><svg viewBox="0 0 20 20"><path d="M.5.500h19v19H.500z" fill="#fff" stroke="#111"/><path d="M3.500 2.500h8l5 5v10h-13zM11 2.500v5h5" fill="#eee" stroke="#333"/></svg><b>用紙</b></span></span></li>
      </ul><div class="vbar"></div></div>
    </div><div class="edge"></div></div>
  </section>
</div>
</div>
<footer class="desk"></footer>
</div>
</body>
</html>
```
FILE: styles.css
```css
* { box-sizing: border-box; }
body { margin: 0; font: 12px/14px "Noto Sans CJK JP", sans-serif; font-feature-settings: "palt"; color: #111; }
button, input, select { font: inherit; font-feature-settings: inherit; color: inherit; padding: 0; margin: 0; border: 0; background: none; }
h1, h3, ul { margin: 0; padding: 0; font-weight: normal; list-style: none; }
i { font-style: normal; }
b { font-weight: normal; }
svg { display: block; flex: none; }
.defs { position: absolute; }
button svg { width: 22px; height: 22px; }
button { display: flex; align-items: center; justify-content: center; flex: none; }

.app { height: 100vh; display: grid; grid-template-rows: 24px 24px minmax(0, 1fr) 4px; background: #e4e4e7; overflow: hidden; }
.titlebar { display: flex; align-items: center; background: linear-gradient(#d4d4d4, #e9e9e9 50%, #cfcfcf); border-top: 1px solid #aaa; border-bottom: 1px solid #aaa; }
.titlebar h1 { flex: 1; padding-left: 54px; text-align: center; font: 14px/22px "DejaVu Sans", "Noto Sans CJK JP", sans-serif; color: #444; white-space: nowrap; }
.winbtns { display: flex; gap: 2px; padding-right: 1px; }
.winbtns svg { width: 16px; height: 16px; }
.menubar { display: grid; grid-template-columns: 73px 64px 102px 77px 89px 65px 80px 87px 60px; padding-left: 13px; background: #f3f7fc; border-bottom: 1px solid #aaacb2; }
.menubar button { justify-content: start; white-space: nowrap; }
.work { display: grid; grid-template-columns: 41px 210px minmax(0, 1fr) 42px 210px; min-height: 0; }
.desk { background: linear-gradient(90deg, #b07c22 0 67%, #3a2a1c 70%, #80452a 72%); border-top: 1px solid #3a1515; }

.collapse { height: 21px; flex: none; display: flex; align-items: center; padding: 0 0 2px 1px; background: linear-gradient(#ececee, #dcdcde); border-bottom: 1px solid #b4b4b9; }
.collapse.end { justify-content: end; }
.collapse.between { justify-content: space-between; padding-left: 3px; }
.chev { width: 11px; height: 11px; }

.tabs { display: flex; height: 22px; flex: none; padding-top: 1px; background: linear-gradient(#e9e9eb, #c6c6ca) 0 0 / 100% 17px no-repeat; }
.tabmenu { width: 18px; height: 16px; border-right: 1px solid #a9a9ad; }
.tabmenu svg { width: 12px; height: 10px; }
.tab { display: flex; align-items: center; gap: 2px; height: 16px; border-right: 1px solid #a9a9ad; white-space: nowrap; background: #cfcfd2; width: 28px; justify-content: center; }
.tab svg { width: 20px; height: 14px; }
.tab.on { width: auto; height: 21px; background: #f3f7fc; padding: 0 5px 0 4px; border-top: 1px solid #a9a9ad; justify-content: start; font-size: 11px; }
.tab.on .nibs { width: 20px; height: 18px; }
.tab.on .nib { width: 10px; height: 18px; }
.tab.on .ic18 { width: 18px; height: 17px; margin-right: 2px; }
.tab.on .tl { width: 17px; height: 13px; margin-right: 4px; }
.tab.nibtab { flex: 1; justify-content: end; border-right: 0; }

.tools { background: #f3f7fc; border-right: 1px solid #a5a5ab; display: flex; flex-direction: column; }
.toolset { display: grid; grid-auto-rows: 26px; justify-items: center; align-items: center; border-bottom: 2px solid #9a9ca2; }
.tools .tabs + .toolset { border-top: 1px solid #8a8c92; }
.toolset button { width: 25px; height: 25px; }
.toolset svg { width: 20px; height: 20px; }
.toolset .sel { background: linear-gradient(#d9e8f3, #b4d1e6); border: 1px solid #8aa9bf; border-radius: 2px; }
.toolset .letter { font: bold 24px/24px "Liberation Serif", serif; color: #333; }

.swatches { position: relative; width: 39px; height: 52px; }
.swatches button { position: absolute; }
.swatches .main { left: 2px; top: 2px; width: 22px; height: 22px; background: #000; border: 1px solid #000; box-shadow: inset 0 0 0 1px #fff; outline: 2px solid #79b8e0; }
.swatches .sub { left: 16px; top: 15px; width: 23px; height: 22px; background: #560008; border: 1px solid #555; }
.swatches .clear { left: 1px; top: 40px; width: 37px; height: 10px; border: 1px solid #999; background: repeating-conic-gradient(#888 0 25%, #fff 0 50%) 0 0 / 10px 10px; }

.left, .right { display: flex; flex-direction: column; background: #f3f7fc; min-height: 0; }
.left { border-right: 2px solid #a2a2a8; padding-left: 1px; }
.panel { display: flex; flex-direction: column; flex: none; border-bottom: 1px solid #adadb2; padding-bottom: 1px; }
.panel + .panel { border-top: 1px solid #d5d5d8; }
.grow { flex: 1; min-height: 0; }
.subgroups { display: grid; grid-template-columns: 1fr 1fr; height: 28px; border-top: 1px solid #8d8f95; border-bottom: 2px solid #9a9ca2; }
.subgroups button { justify-content: start; gap: 6px; padding-left: 3px; border: 1px solid #b6b9be; border-radius: 3px; }
.subgroups button.on { background: linear-gradient(#d4e6f2, #b6d3e8); border-color: #86a7be; }
.subgroups svg { width: 19px; height: 19px; }
.scroller { display: flex; position: relative; border-top: 1px solid #8d8f95; }
.subs { height: 248px; border-top: 0; border-bottom: 1px solid #9a9ca2; }
.brushes { flex: 1; border-right: 1px solid #c5c7cb; }
.brushes li { position: relative; display: flex; height: 36px; align-items: end; justify-content: end; border-bottom: 1px solid #9a9ca2; }
.brushes li.on { background: linear-gradient(#d0e4f1, #b4d2e8); }
.brushes li.on span { background: #c9ddeb; padding-left: 8px; }
.brushes svg { position: absolute; left: 15px; top: 1px; width: 100px; height: 24px; }
.brushes svg.small { left: 22px; width: 82px; }
.brushes svg.soft { filter: blur(1px); }
.brushes svg.pale { opacity: .7; }
.brushes span { padding: 0 3px 2px; }
.foot { display: flex; justify-content: end; align-items: center; height: 19px; }
.foot button { width: 20px; }
.foot svg { width: 19px; height: 19px; }

.vbar { width: 12px; flex: none; display: flex; flex-direction: column; justify-content: space-between; background: #d6d8dc; border-left: 1px solid #b5b7bc; }
.vbar button, .hbar button { width: 11px; height: 12px; background: #f6f8fb; border: 1px solid #b9bbc0; border-radius: 2px; }
.vbar button::after, .hbar button::after { content: ""; border: 3px solid transparent; border-top-width: 0; border-bottom-color: #444; }
.vbar .down::after { transform: rotate(180deg); }
.hbar .lt::after { transform: rotate(-90deg); }
.hbar .rt::after { transform: rotate(90deg); }
.thumb { background: linear-gradient(90deg, #fff, #edf1f6); border: 1px solid #b9bbc0; border-radius: 2px; display: flex; align-items: center; justify-content: center; }
.vbar .thumb::after { content: ""; width: 5px; height: 7px; background: repeating-linear-gradient(#888 0 1px, transparent 1px 3px); }
.vbar .t-prop { flex: 1; margin-bottom: 12px; }
.vbar .t-size { height: 71px; margin-bottom: auto; }

.preview { position: relative; height: 40px; background: linear-gradient(90deg, #b4b4b4 50%, transparent 50%); border-top: 1px solid #8d8f95; }
.preview span { position: absolute; left: 1px; top: 0; background: #c8c8c8; padding: 0 8px 2px 2px; }
.preview .stroke { position: absolute; left: 26px; top: 7px; width: 160px; height: 24px; }
.preview .wrench { position: absolute; right: 2px; bottom: 1px; width: 17px; height: 17px; }
.props { flex: 1; min-width: 0; height: 205px; padding: 0 3px 0 5px; overflow: hidden; font-size: 11px; }
.props h3 { display: flex; align-items: center; gap: 3px; height: 14px; line-height: 14px; white-space: nowrap; }
.props h3::before, .props h3::after { content: ""; height: 1px; width: 3px; background: #ccd0d5; }
.props h3::after { flex: 1; }
.row { display: flex; align-items: center; justify-content: end; gap: 3px; }
.r18 { height: 18px; }
.r26 { height: 29px; }
.r22 { height: 22px; }
.r28 { height: 28px; }
.row input[type=range] { width: 81px; height: 9px; }
input[type=range] { appearance: none; display: block; border: 1px solid #a9abb0; background: #fff; }
input[type=range]::-webkit-slider-thumb { appearance: none; width: 1px; height: 1px; }
input.half { border-width: 0 1px 1px 0; background: linear-gradient(90deg, #fafafa, #c4c4c4) 0 0 / 40px 100% no-repeat; }
input.full { background: linear-gradient(90deg, #fafafa, #bdbdbd); }
.num { width: 38px; text-align: right; height: 14px; }
.spin { width: 11px; height: 14px; flex: none; display: grid; gap: 3px; align-content: center; justify-items: center; }
.spin::before, .spin::after { content: ""; border: 5px solid transparent; border-width: 0 5px 5px; border-bottom-color: #a2a4a8; }
.spin::after { transform: rotate(180deg); }
.plus { width: 11px; height: 11px; border: 1px solid #999; border-radius: 2px; line-height: 9px; margin-right: auto; }
.dyn { width: 14px; height: 15px; border: 1px solid #a9abb0; border-radius: 2px; flex: none; background: #f8f8fa; }
.dyn svg { width: 12px; height: 12px; fill: #777; }
.dyn.tall { height: 20px; }
.dyn.none { border: 0; background: none; }
.seg { display: flex; height: 24px; border: 1px solid #a9abb0; border-radius: 3px; background: linear-gradient(#fdfdfe, #e9eaed); }
.seg button { width: 28px; }
.seg .on { background: #c3def0; outline: 1px solid #8fb3cc; }
.seg .dd { width: 12px; margin-right: 1px; }
.dot { width: 15px; height: 15px; border-radius: 50%; background: #4a4a4a; }
.dot.d2 { border: 3px solid #ccc; width: 17px; height: 17px; }
.dot.d3 { width: 17px; height: 17px; background: radial-gradient(#333 30%, #888 40%, #aaa 70%); }
.dot.d4 { width: 19px; height: 19px; background: radial-gradient(#444 20%, #999 50%, #ddd 70%); }
.arr { width: 0; height: 0; flex: none; border: 5px solid transparent; border-width: 5px 5px 0; border-top-color: #555; }
.arrr { border: 5px solid transparent; border-width: 5px 0 5px 5px; border-left-color: #555; }
.sublabel { margin-right: auto; padding-left: 13px; white-space: nowrap; }
.row .hard { display: flex; gap: 1px; margin-left: -3px; margin-right: -1px; }
.hard i { width: 26px; height: 18px; border: 1px solid #a9abb0; background: #f1f1f1; }
.hard i:nth-child(2) { background: #e4e4e4; }
.hard i:nth-child(3) { background: #d8d8d8; }
.hard i:nth-child(4) { background: #ccc; }
.hard i:nth-child(5) { background: #c0c0c0; }
.ruled { border-top: 1px solid #ccd0d5; }
.stack { display: grid; justify-items: end; margin-right: auto; padding-left: 13px; width: 113px; }
.stack label { justify-self: start; line-height: 15px; }
.topal { align-items: start; }
.wide { flex: 1; height: 22px; border: 1px solid #a9abb0; border-radius: 3px; background: #e4e5e8; }

.sizegrid { flex: 1; display: grid; grid-template-columns: repeat(6, 1fr); grid-auto-rows: 40px; height: 155px; overflow: hidden; }
.sizegrid button { display: grid; grid-template-rows: 10px 14px; align-content: start; justify-items: center; align-items: center; padding-top: 12px; border-right: 1px solid #9a9ca2; border-bottom: 1px solid #9a9ca2; font-size: 11px; line-height: 14px; }
.sizegrid i { border-radius: 50%; background: #000; }
.sizegrid .on { background: linear-gradient(#dce9f3, #c1d8e8); box-shadow: inset 0 0 0 1px #a9bfcf; }
.sizegrid .big i { width: 24px; height: 24px; background: linear-gradient(#000 70%, #888 70%); }
.p1 { width: 1px; height: 1px; }
.p2 { width: 2px; height: 2px; }
.p3 { width: 3px; height: 3px; }
.p4 { width: 4px; height: 4px; }
.p5 { width: 5px; height: 5px; }
.p6 { width: 6px; height: 6px; }
.p7 { width: 7px; height: 7px; }
.p9 { width: 9px; height: 9px; }
.p11 { width: 11px; height: 11px; }
.p14 { width: 14px; height: 14px; }
.p16 { width: 16px; height: 16px; }
.p19 { width: 19px; height: 19px; }

.tab.coltab { width: 49px; }
.minwheel { flex: none; width: 16px; height: 16px; border-radius: 50%; background: radial-gradient(#fff 3px, transparent 4px), conic-gradient(from -60deg, red, yellow, lime, cyan, blue, magenta, red); }
.coltab span { color: #555; }
.color { flex: 1; display: flex; }
.wheelbox { flex: 1; position: relative; display: flex; justify-content: center; padding-top: 3px; }
.wheel { position: relative; width: 130px; height: 130px; border-radius: 50%; border: 1px solid #bbb; background: conic-gradient(from -60deg, red, yellow, lime, cyan, blue, magenta, red); display: grid; place-items: center; }
.hole { width: 104px; height: 104px; border-radius: 50%; background: #f3f7fc; border: 1px solid #bbb; display: grid; place-items: center; }
.square { position: relative; width: 69px; height: 69px; border: 1px solid #999; background: linear-gradient(transparent, #000), linear-gradient(90deg, #fff, #f00); }
.pick { position: absolute; left: -5px; bottom: -4px; width: 8px; height: 8px; border: 1px solid #000; background: #fff; }
.huepick { position: absolute; left: 5px; top: 31px; width: 14px; height: 6px; border: 1px dashed #000; transform: rotate(25deg); }
.wheelbox .swatches { position: absolute; left: 0; bottom: 0; width: 36px; height: 51px; }
.wheelbox .swatches .main { width: 19px; height: 19px; }
.wheelbox .swatches .sub { width: 21px; left: 13px; }
.wheelbox .swatches .clear { width: 34px; }
.hsv { position: absolute; left: 74px; bottom: 2px; display: grid; grid-template-columns: 9px 17px 13px 17px 13px 17px; column-gap: 1px; align-items: center; text-align: right; font-size: 11px; }
.hsv b { background: #112; color: #fff; font-weight: bold; font-size: 9px; line-height: 8px; width: 9px; text-align: center; justify-self: end; }
.miniplay { position: absolute; left: 177px; bottom: 6px; width: 16px; height: 16px; border-radius: 50%; background: radial-gradient(#a55 2px, #eee 3px 5px, transparent 6px), conic-gradient(from -60deg, red, yellow, lime, cyan, blue, magenta, red); }
.grip, .edge { flex: none; width: 9px; background: repeating-linear-gradient(90deg, #a9abb2 0 1px, #e2e3e7 1px 3px); }
.edge { width: 5px; background: linear-gradient(90deg, #a5a7ad 1px, #dcdde0 1px 3px, #a5a7ad 3px 4px, #dcdde0 4px); }

.main-col { display: grid; grid-template-rows: 26px 25px minmax(0, 1fr) 13px 25px; min-width: 0; }
.toolbar { display: flex; align-items: center; background: #f3f7fc; border-bottom: 1px solid #b4b6bc; padding: 1px 0 0 2px; }
.toolbar button { width: 24px; }
.toolbar button svg { width: 19px; height: 19px; }
.toolbar .swirl { width: 40px; height: 20px; border: 1px solid #bbb; border-radius: 3px; background: linear-gradient(#fafafb, #e6e6e8); }
.toolbar .swirl svg { width: 20px; height: 16px; }
.toolbar .ddn { width: 12px; }
.sep { width: 1px; height: 22px; background: #cdd0d5; margin: 0 2px 0 5px; }
.sep.first { margin-left: 8px; }
.clip { margin-left: 3px; height: 20px; padding: 0 1px; border: 1px solid #b5b5b8; border-radius: 2px; background: #f0f0f2; color: #666; text-decoration: none; font: 10px/18px "Liberation Sans", "Noto Sans CJK JP", sans-serif; }
.doctabs { display: flex; justify-content: space-between; background: #e7e7e9; border-bottom: 2px solid #8f9096; }
.doctab { display: flex; align-items: center; gap: 5px; height: 22px; padding: 0 4px 0 3px; border: 1px solid #b9b9bd; border-width: 0 1px 1px; background: #efeff2; }
.doctab button svg { width: 8px; height: 8px; }
.doclist { width: 12px; background: #f6f8fb; border: 1px solid #b9bbc0; border-radius: 2px; }
.doclist .arr { border-width: 4px 3px 0; }
.canvasrow { display: flex; background: #c8c8c8; }
.canvas { flex: 1; display: grid; place-items: center; padding-left: 2px; border-left: 1px solid #a5a5ab; overflow: hidden; }
.paper { height: 442px; aspect-ratio: 313 / 442; background: #fff; }
.track { flex: 1; display: flex; }
.track::before, .track::after { content: ""; flex: 22; }
.main-v .track { flex-direction: column; }
.main-v .thumb { flex: 44; }
.status { display: flex; background: #f3f7fc; padding-left: 2px; }
.status button { width: 20px; height: 12px; }
.status button svg { width: 13px; height: 13px; }
.slidebox { position: relative; width: 88px; height: 13px; flex: none; }
.slidebox input { width: 100%; height: 100%; border-color: #999ba0; }
.slidebox output { position: absolute; right: 3px; top: 0; line-height: 13px; font-size: 11px; }
.slidebox.rot output { right: auto; left: 7px; }
.slidebox::after { content: ""; position: absolute; left: 27px; top: -3px; bottom: -3px; width: 4px; background: #dcdcdf; border: 1px solid #a0a2a7; }
.slidebox.rot::after { left: 42px; }
.w98 { width: 98px; }
.status .slidebox::after { left: 31px; top: 0; bottom: 0; }
.status .rot::after { left: 47px; }
input.wedge { background: linear-gradient(to bottom right, transparent 50%, #a4a6aa 50%); }
input.bulge { background: linear-gradient(to bottom left, transparent 50%, #a4a6aa 50%) 0 0 / 18% 100% no-repeat, linear-gradient(to bottom right, transparent 50%, #a4a6aa 50%) 53% 0 / 26% 100% no-repeat, linear-gradient(#a4a6aa, #a4a6aa) 73% 0 / 13% 100% no-repeat, linear-gradient(to bottom left, transparent 50%, #a4a6aa 50%) 100% 0 / 24% 100% no-repeat; }
.hbar { flex: 1; display: flex; background: #d6d8dc; border-top: 1px solid #9a9ca2; }
.hbar button { width: 11px; }
.hbar .thumb { flex: 61; background: linear-gradient(#fff, #edf1f6); }
.hbar .thumb i { width: 8px; height: 6px; background: repeating-linear-gradient(90deg, #888 0 1px, transparent 1px 3px); }
.corner { width: 20px; border-right: 2px solid #b4b6bc; }
.timeline { display: flex; border-top: 1px solid #a5a5ab; padding: 1px 0 0 1px; border-right: 2px solid #a2a2a8; background: #f3f7fc; }
.timeline .tabs { flex: 1; }
.rise { width: 20px; background: #e4e4e7; align-items: end; padding-bottom: 5px; }
.rise svg { width: 14px; height: 8px; }

.dock { border-left: 1px solid #a2a2a8; background: linear-gradient(90deg, #dfdfe2, #e9e9eb); border-right: 1px solid #a2a2a8; }
.dockbtns { display: grid; gap: 4px; padding: 1px 0 0 4px; }
.dockbtns button { width: 34px; height: 40px; background: #f3f7fc; border: 1px solid #a2a4a9; }
.dockbtns svg { width: 28px; height: 28px; }

.right { border-left: 1px solid #c9c9cd; border-right: 1px solid #c9c9cd; }
.navwrap, .layerwrap { display: flex; }
.layerwrap { flex: 1; min-height: 0; }
.navmain { flex: 1; min-width: 0; }
.navview { height: 112px; background: #c8c8c8; border: 1px solid #9a9ca2; display: grid; place-items: center; padding-bottom: 2px; }
.navpaper { width: 64px; height: 90px; background: #fff; }
.navctl { display: flex; align-items: center; height: 20px; padding-left: 5px; }
.navctl:nth-child(2) { height: 23px; padding-top: 3px; }
.navctl button { width: 20px; }
.navctl button svg { width: 16px; height: 16px; }
.navctl .slidebox { margin-right: 4px; height: 12px; }
.vs { width: 1px; height: 16px; background: #c5c7cc; margin: 0 2px; }
.lprop { height: 239px; }
.lprop .tabs { height: 21px; }
.lprop .props { height: auto; font-size: 12px; }
.effects { display: flex; justify-content: end; height: 22px; }
.effects .seg { height: 20px; padding-left: 1px; }
.effects .seg button { width: 24px; }
.effects .seg .dd { width: 12px; margin: 0; }
.effects svg { width: 16px; height: 16px; }
.effects .dot { width: 10px; height: 10px; }
.lprop h3 + .colorsel { margin: 5px 0 0 11px; }
.colorsel, .mode { position: relative; display: flex; align-items: center; width: 119px; height: 19px; border: 1px solid #a9abb0; border-radius: 2px; background: linear-gradient(#fdfdfe, #e9eaed); }
.colorsel .rgb { width: 14px; height: 14px; margin-left: 28px; background: linear-gradient(90deg, #f99 33%, #8bd 33% 66%, #9e9 66%); }
.colorsel select, .mode select { appearance: none; flex: 1; padding-left: 7px; }
.colorsel .arr, .mode .arr { margin-right: 2px; }
.mode { width: 101px; }
.mode select { padding-left: 30px; }

.layers { flex: 1; min-width: 0; display: flex; flex-direction: column; }
.lrow { display: flex; align-items: center; height: 21px; }
input.opac { width: 54px; height: 9px; margin-left: 6px; border-color: #bbb; background: linear-gradient(90deg, #fff0, #aaa), repeating-conic-gradient(#ccc 0 25%, #fff 0 50%) 0 0 / 8px 8px; }
.lrow .num { width: 27px; }
.lrow .spin { margin-left: 3px; }
.icons button { width: 20px; }
.icons button svg { width: 18px; height: 18px; }
.icons .off { width: 30px; height: 19px; margin-left: 2px; border: 1px solid #cfd1d5; border-radius: 2px; }
.icons .off svg { width: 26px; }
.swsel { width: 35px; height: 19px; border: 1px solid #a9abb0; border-radius: 2px; display: flex; align-items: center; justify-content: space-between; padding: 0 2px; }
.swsel i:first-child { width: 17px; height: 15px; border: 1px solid #a9abb0; background: #eceff5; }
.swsel .arr { border-width: 5px 4px 0; }
.acts { height: 23px; border-top: 1px solid #d8dade; }
.acts button { width: 20px; }
.acts button svg { width: 18px; height: 18px; }
.acts .lead { margin-right: 23px; }
.listwrap { flex: 1; display: flex; border-top: 2px solid #8d8f95; }
.layerlist { flex: 1; min-width: 0; margin-left: 3px; border-left: 1px solid #8d8f95; }
.layerlist li { display: grid; grid-template-columns: 20px 18px 1fr; height: 41px; border-bottom: 1px solid #8d8f95; }
.layerlist li > span { display: flex; align-items: center; justify-content: center; border-right: 1px solid #9a9ca2; }
.layerlist li > .body { justify-content: start; gap: 5px; padding-left: 4px; border-right: 0; }
.layerlist .on .body { background: linear-gradient(#dbe8f2, #c8dcea); }
.eye svg { width: 13px; height: 10px; }
.pen svg { width: 13px; height: 13px; }
.thumbnail { width: 28px; height: 36px; border: 1px solid #000; background: #fff; margin: 0 1px; }
.thumbnail.chk { outline: 1px solid #000; outline-offset: 1px; background: repeating-conic-gradient(#ccc 0 25%, #fff 0 50%) 0 0 / 8px 8px; }
.txt { display: grid; gap: 5px; white-space: nowrap; line-height: 14px; }
.txt.paperlbl { gap: 0; }
.paperlbl svg { width: 20px; height: 20px; }
```
